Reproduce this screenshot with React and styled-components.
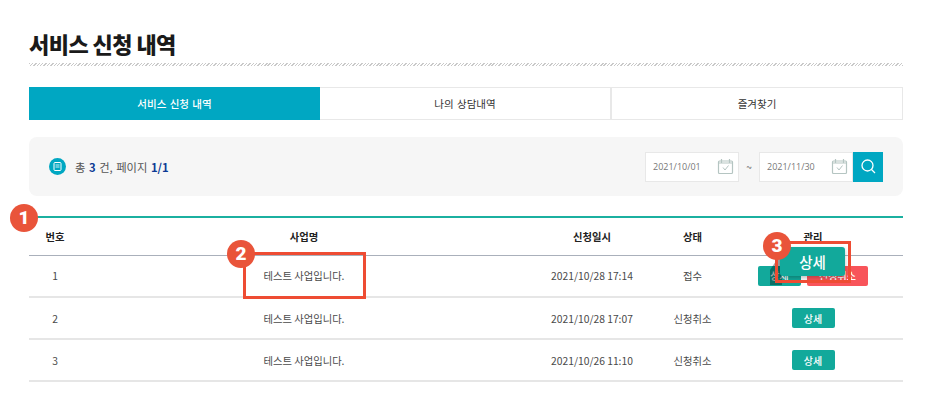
import React from "react";
import styled, { createGlobalStyle } from "styled-components";

const Global = createGlobalStyle`
  html, body { margin: 0; padding: 0; background: #fff; }
  body { font-family: "Noto Sans CJK KR", "Noto Sans", sans-serif; color: #333; }
  * { box-sizing: border-box; }
`;
const Page = styled.div`
  position: relative;
  width: 933px;
  height: 413px;
  overflow: hidden;
  padding: 27px 30px 0 29px;
`;
const Title = styled.h1`
  margin: 0;
  height: 33px;
  font-size: 22px;
  line-height: 33px;
  font-weight: 900;
  color: #1a1a1a;
  letter-spacing: -0.55px;
`;
const Hatch = styled.div`
  height: 3px;
  margin-top: 3px;
  background: repeating-linear-gradient(135deg, #c9c9c9 0 1px, #fff 1px 2.4px);
`;
const Tabs = styled.div`
  display: grid;
  grid-template-columns: 291px 291px 292px;
  margin-top: 21px;
  height: 33px;
`;
const Tab = styled.div`
  display: flex;
  align-items: center;
  justify-content: center;
  font-size: 10.5px;
  word-spacing: 1px;
  font-weight: ${(p) => (p.$active ? 500 : 400)};
  color: ${(p) => (p.$active ? "#fff" : "#333")};
  background: ${(p) => (p.$active ? "#00a7c2" : "#fff")};
  border: 1px solid ${(p) => (p.$active ? "#00a7c2" : "#e8e8e8")};
  border-left-width: ${(p) => (p.$active ? "1px" : "0")};
  &:last-child { border-left-width: 1px; }
`;
const Panel = styled.div`
  margin-top: 17px;
  height: 59px;
  border-radius: 8px;
  background: #f6f6f6;
  display: flex;
  align-items: center;
  justify-content: space-between;
  padding: 0 20px;
`;
const Summary = styled.div`
  display: flex;
  align-items: center;
  gap: 9px;
  font-size: 11.3px;
  word-spacing: 1px;
  color: #555;
`;
const RoundIcon = styled.span`
  width: 17px;
  height: 17px;
  border-radius: 50%;
  background: #00a7c2;
  display: flex;
  align-items: center;
  justify-content: center;
`;
const Num = styled.b`
  color: #0b3a94;
  font-weight: 700;
`;
const DateGroup = styled.div`
  display: flex;
  align-items: center;
`;
const DateBox = styled.div`
  width: 94px;
  height: 30px;
  background: #fff;
  border: 1px solid #e8e8e8;
  display: flex;
  align-items: center;
  justify-content: space-between;
  padding: 0 4px 0 7px;
  font-family: "Open Sans", sans-serif;
  font-size: 9px;
  color: #777;
`;
const Tilde = styled.span`
  width: 20px;
  text-align: center;
  font-size: 10px;
  color: #666;
`;
const SearchBtn = styled.button`
  width: 30px;
  height: 30px;
  padding: 0;
  border: 0;
  background: #00a7c2;
  display: flex;
  align-items: center;
  justify-content: center;
`;
const Table = styled.table`
  margin-top: 20px;
  width: 874px;
  table-layout: fixed;
  border-collapse: collapse;
  border-top: 2px solid #1bb0a0;
`;
const Th = styled.th`
  height: 38px;
  padding: 0 ${(p) => p.$pr || 0}px 0 0;
  font-size: 10.3px;
  font-weight: 700;
  color: #222;
  border-bottom: 1px solid #aab0bb;
`;
const Td = styled.td`
  height: 42px;
  padding: 0 ${(p) => p.$pr || 0}px 0 0;
  font-size: 10.3px;
  color: #4a4a4a;
  text-align: center;
  border-bottom: 2px solid #e6e6e6;
`;
const Actions = styled.div`
  display: flex;
  justify-content: center;
  gap: 6px;
`;
const SmallBtn = styled.span`
  display: flex;
  align-items: center;
  justify-content: center;
  height: 20px;
  width: ${(p) => p.$w}px;
  border-radius: 2px;
  font-size: 10px;
  font-weight: 500;
  color: #fff;
  background: ${(p) => p.$bg};
`;
const Badge = styled.span`
  position: absolute;
  left: ${(p) => p.$x}px;
  top: ${(p) => p.$y}px;
  width: 28px;
  height: 28px;
  border-radius: 50%;
  background: #e9543a;
  color: #fff;
  font-family: Roboto, sans-serif;
  font-size: 19px;
  font-weight: 900;
  line-height: 28px;
  text-align: center;
  z-index: 5;
`;
const Mark = styled.span`
  position: absolute;
  left: ${(p) => p.$x}px;
  top: ${(p) => p.$y}px;
  width: ${(p) => p.$w}px;
  height: ${(p) => p.$h}px;
  border: 3px solid #ee4c33;
  z-index: 4;
`;
const BigBtn = styled.span`
  position: absolute;
  left: 780px;
  top: 247px;
  width: 65px;
  height: 29px;
  border-radius: 3px;
  background: #12a99b;
  color: #fff;
  font-size: 14.5px;
  font-weight: 500;
  line-height: 29px;
  text-align: center;
  z-index: 3;
  box-shadow: 0 2px 4px rgba(0, 0, 0, 0.25);
`;
const Shadow = styled.svg`
  position: absolute;
  left: 762px;
  top: 255px;
  z-index: 2;
`;

const Calendar = () => (
  <svg width="17" height="17" viewBox="0 0 17 17" fill="none" stroke="#b5c5c2" strokeWidth="1.2">
    <rect x="1.5" y="3" width="14" height="12.5" rx="1" />
    <path d="M4.5 1v3.5M12.5 1v3.5M1.5 5h14" />
    <path d="M6 9.5l2 2.5 3.5-4.5" strokeWidth="1" />
  </svg>
);

const rows = [
  ["1", "2021/10/28 17:14", "접수", true],
  ["2", "2021/10/28 17:07", "신청취소", false],
  ["3", "2021/10/26 11:10", "신청취소", false],
];

export default function App() {
  return (
    <Page>
      <Global />
      <Title>서비스 신청 내역</Title>
      <Hatch />
      <Tabs>
        <Tab $active>서비스 신청 내역</Tab>
        <Tab>나의 상담내역</Tab>
        <Tab>즐겨찾기</Tab>
      </Tabs>
      <Panel>
        <Summary>
          <RoundIcon>
            <svg width="11" height="11" viewBox="0 0 11 11" fill="none" stroke="#fff" strokeWidth="1">
              <rect x="2" y="1.5" width="7" height="8" rx="1" />
              <path d="M3.5 4h4M3.5 6h4" strokeWidth="0.8" />
            </svg>
          </RoundIcon>
          <span>
            총 <Num>3</Num> 건, 페이지 <Num>1/1</Num>
          </span>
        </Summary>
        <DateGroup>
          <DateBox>2021/10/01<Calendar /></DateBox>
          <Tilde>~</Tilde>
          <DateBox>2021/11/30<Calendar /></DateBox>
          <SearchBtn aria-label="검색">
            <svg width="17" height="17" viewBox="0 0 17 17" fill="none" stroke="#fff" strokeWidth="1.3">
              <circle cx="7.5" cy="7.5" r="5.5" />
              <path d="M11.5 11.5l3.5 3.5" />
            </svg>
          </SearchBtn>
        </DateGroup>
      </Panel>
      <Table>
        <colgroup>
          <col width="52" />
          <col width="446" />
          <col width="130" />
          <col width="71" />
          <col width="175" />
        </colgroup>
        <thead>
          <tr>
            <Th>번호</Th>
            <Th>사업명</Th>
            <Th>신청일시</Th>
            <Th>상태</Th>
            <Th $pr={5}>관리</Th>
          </tr>
        </thead>
        <tbody>
          {rows.map((r) => (
            <tr key={r[0]}>
              <Td>{r[0]}</Td>
              <Td>테스트 사업입니다.</Td>
              <Td>{r[1]}</Td>
              <Td>{r[2]}</Td>
              <Td $pr={5}>
                <Actions>
                  <SmallBtn $w={43} $bg="#12a99b">상세</SmallBtn>
                  {r[3] && <SmallBtn $w={61} $bg="#f8545a">신청취소</SmallBtn>}
                </Actions>
              </Td>
            </tr>
          ))}
        </tbody>
      </Table>
      <Badge $x={10} $y={204}>1</Badge>
      <Badge $x={227} $y={240}>2</Badge>
      <Mark $x={243} $y={252} $w={123} $h={47} />
      <Shadow width="30" height="30" viewBox="0 0 30 30">
        <path d="M18 0L8 15v15h12V0z" fill="#000" opacity="0.35" />
      </Shadow>
      <BigBtn>상세</BigBtn>
      <Badge $x={763} $y={232}>3</Badge>
      <Mark $x={775} $y={241} $w={76} $h={42} />
    </Page>
  );
}
